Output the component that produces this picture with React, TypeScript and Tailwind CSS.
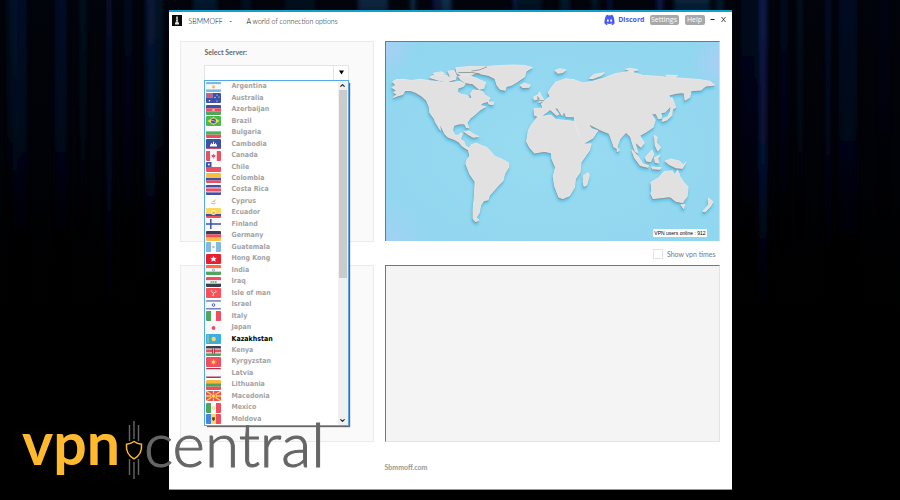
import React from "react";
import { FaDiscord } from "react-icons/fa";
import { ChevronDown, ChevronUp } from "lucide-react";

const R = "#ee4f60";
const B = "#3f51a5";
const G = "#50a45c";
const W = "#f6f8fb";
const Y = "#fbd75b";

function H({ c, s }: { c: string[]; s?: number[] }) {
  const sizes = s ?? c.map(() => 10 / c.length);
  let y = 0;
  return (
    <>
      {c.map((fill, i) => {
        const top = y;
        y += sizes[i];
        return <rect key={i} x="0" y={top} width="15" height={sizes[i]} fill={fill} />;
      })}
    </>
  );
}

function V({ c, s }: { c: string[]; s?: number[] }) {
  const sizes = s ?? c.map(() => 15 / c.length);
  let x = 0;
  return (
    <>
      {c.map((fill, i) => {
        const left = x;
        x += sizes[i];
        return <rect key={i} x={left} y="0" width={sizes[i]} height="10" fill={fill} />;
      })}
    </>
  );
}

const Fill = ({ c }: { c: string }) => <rect width="15" height="10" fill={c} />;

const servers: { name: string; flag: React.ReactNode }[] = [
  { name: "Argentina", flag: <><H c={["#7fb8e2", W, "#7fb8e2"]} s={[2.4, 5, 2.6]} /><circle cx="7.5" cy="5" r="1.4" fill="#f7b43c" /></> },
  { name: "Australia", flag: <><Fill c={B} /><rect width="7" height="5" fill="#8c80bd" /><path d="M0 0L7 5M7 0L0 5M3.5 0V5M0 2.5H7" stroke={R} strokeWidth="1" /><g fill="#fff"><circle cx="3.5" cy="7.8" r=".8" /><circle cx="11" cy="2" r=".6" /><circle cx="9" cy="4.4" r=".6" /><circle cx="13" cy="4" r=".6" /><circle cx="11" cy="8" r=".6" /></g></> },
  { name: "Azerbaijan", flag: <><H c={[B, R, G]} /><circle cx="7.5" cy="5" r="1.3" fill="#f7b5bd" /></> },
  { name: "Brazil", flag: <><Fill c="#4bb84f" /><path d="M7.5 1L13.5 5L7.5 9L1.5 5Z" fill={Y} /><circle cx="7.5" cy="5" r="2.5" fill={B} /><path d="M5.3 4.5Q8 4.1 9.7 6" stroke="#fff" strokeWidth=".6" fill="none" /></> },
  { name: "Bulgaria", flag: <H c={[W, "#4cb357", R]} /> },
  { name: "Cambodia", flag: <><Fill c={B} /><rect y="9.2" width="15" height="0.8" fill={R} /><path d="M4 7.5V5.5H5V4.3H6V5H7V2.8H8V5H9V4.3H10V5.5H11V7.5Z" fill="#fff" /></> },
  { name: "Canada", flag: <><V c={[R, W, R]} s={[4.2, 6.6, 4.2]} /><path d="M7.5 2.7L8.3 4.1L9.7 4.2L8.7 6.3H6.3L5.3 4.2L6.7 4.1ZM7.2 6H7.8V7.5H7.2Z" fill={R} /></> },
  { name: "Chile", flag: <><H c={[W, R]} /><rect width="5.5" height="5" fill={B} /><circle cx="2.8" cy="2.5" r="1" fill="#fff" /></> },
  { name: "Colombia", flag: <H c={["#f9bd42", B, R]} s={[5, 2.5, 2.5]} /> },
  { name: "Costa Rica", flag: <H c={[B, "#e9c9d6", R, "#e9c9d6", B]} s={[2.6, 0.8, 3.2, 0.8, 2.6]} /> },
  { name: "Cyprus", flag: <><Fill c="#fcfcfa" /><path d="M6 5.2L8.4 4.6L9.8 2.8L9 5.4L7.2 6.2Z" fill="#f0b469" /><path d="M5 6.8Q7 9 9.5 7" stroke="#7fbd8d" fill="none" strokeWidth=".8" /></> },
  { name: "Ecuador", flag: <><H c={[Y, B, R]} s={[6, 2, 2]} /><circle cx="7.5" cy="4.6" r="2.5" fill="#fff3a8" /><circle cx="7.5" cy="4.8" r="1.4" fill="#e8b73f" /></> },
  { name: "Finland", flag: <><Fill c={W} /><path d="M4.8 0V10M0 5H15" stroke={B} strokeWidth="1.5" /></> },
  { name: "Germany", flag: <H c={["#3b3e4e", R, "#fbbc42"]} /> },
  { name: "Guatemala", flag: <><V c={["#82b8e2", W, "#82b8e2"]} /><circle cx="7.5" cy="5" r="1.3" fill="#b5cf8e" /></> },
  { name: "Hong Kong", flag: <><Fill c="#ea1f2e" /><path d="M7.5 1.8L8.5 3.9L10.7 3.8L9.1 5.5L9.6 7.7L7.5 6.5L5.4 7.7L5.9 5.5L4.3 3.8L6.5 3.9Z" fill="#fff" /></> },
  { name: "India", flag: <><H c={["#ff6d45", W, G]} /><circle cx="7.5" cy="5" r="1.1" stroke="#8089c0" fill="none" strokeWidth=".7" /></> },
  { name: "Iraq", flag: <><H c={[R, W, "#3b3e4a"]} /><path d="M4.5 5H6.5M7 5H8M8.6 5H10.6" stroke={G} strokeWidth="1.5" /></> },
  { name: "Isle of man", flag: <><Fill c="#fb5058" /><path d="M7.5 5L4.8 3.2L6.4 2.4M7.5 5L10.5 3.6L9 2.2M7.5 5L7.3 8L5.8 7" stroke="#ddd" strokeWidth=".9" fill="none" /></> },
  { name: "Israel", flag: <><H c={[W, B, W, B, W]} s={[0.4, 1.3, 6.6, 1.3, 0.4]} /><circle cx="7.5" cy="5" r="1.3" stroke={B} strokeWidth=".9" fill="none" /></> },
  { name: "Italy", flag: <V c={[G, W, R]} /> },
  { name: "Japan", flag: <><Fill c={W} /><circle cx="7.5" cy="5" r="1.9" fill={R} /></> },
  { name: "Kazakhstan", flag: <><Fill c="#3aaee0" /><path d="M2 1V9" stroke="#c9cd70" strokeWidth="1" /><circle cx="7.7" cy="5" r="2.2" fill="#f5d863" /></> },
  { name: "Kenya", flag: <><H c={["#3b3e4a", W, R, W, G]} s={[2.7, 0.7, 3.2, 0.7, 2.7]} /><ellipse cx="7.5" cy="5" rx="1.5" ry="3.5" fill="#a33a44" /><path d="M7.5 2V8" stroke="#fff" strokeWidth=".6" /></> },
  { name: "Kyrgyzstan", flag: <><Fill c={R} /><path d="M7.5 1.8V8.2M4.3 5H10.7M5.2 2.7L9.8 7.3M9.8 2.7L5.2 7.3" stroke="#f6a65a" strokeWidth=".7" /><circle cx="7.5" cy="5" r="1.6" fill={Y} /></> },
  { name: "Latvia", flag: <H c={["#b5344c", W, "#b5344c"]} s={[1.5, 7, 1.5]} /> },
  { name: "Lithuania", flag: <H c={["#fab83e", G, R]} /> },
  { name: "Macedonia", flag: <><Fill c={R} /><path d="M0 0L15 10M15 0L0 10M7.5 0V10M0 5H15" stroke={Y} strokeWidth="1.3" /><circle cx="7.5" cy="5" r="2.1" fill={Y} stroke={R} strokeWidth=".7" /></> },
  { name: "Mexico", flag: <><V c={[G, W, R]} /><circle cx="7.5" cy="5" r="1.4" fill="none" stroke="#e9c66a" strokeWidth=".8" /></> },
  { name: "Moldova", flag: <><V c={["#4a85dd", Y, R]} /><path d="M6.2 3.3H8.8V5.8L7.5 7L6.2 5.8Z" fill="#4c4038" /></> },
];

const land = [
  // North America
  "M38 140L50 133L70 132L95 136L120 132L150 137L180 140L215 142L240 138L256 146L250 154L235 158L232 170L245 178L262 180L270 192L277 188L272 176L280 164L295 166L308 168L316 180L331 188L326 198L310 202L300 210L318 214L300 224L285 238L270 250L262 263L267 277L260 276L254 264L235 266L222 270L218 285L226 300L238 298L244 292L248 296L242 312L252 318L258 332L269 338L264 342L248 332L238 320L225 312L205 305L195 295L185 275L176 258L182 284L168 262L163 250L150 232L148 215L140 195L125 182L105 170L90 165L75 166L68 178L55 181L40 187L52 177L42 172L50 165L36 157L48 150Z",
  // Arctic islands
  "M150 127L165 118L178 122L200 120L208 128L225 132L205 138L180 136Z",
  "M160 114L185 110L196 116L180 120Z",
  "M205 108L222 106L230 122L226 134L212 128Z",
  "M228 98L270 94L325 95L300 108L275 120L248 122L232 114Z",
  "M236 124L262 118L290 130L318 142L312 160L298 162L280 146L256 142L244 134Z",
  // Greenland and Iceland
  "M275 108L322 94L350 92L400 90L435 91L458 97L440 108L435 125L415 138L395 150L380 154L376 165L362 162L352 150L346 130L325 120L300 115Z",
  "M422 150L435 144L452 149L448 156L430 157Z",
  // Caribbean
  "M253 288L268 287L282 296L296 303L280 305L266 297Z",
  "M326 200L342 200L340 208L328 206Z",
  // South America
  "M266 342L275 328L290 323L305 330L320 335L335 350L345 362L365 370L386 381L387 395L375 415L370 435L355 450L345 462L330 478L325 492L312 495L303 508L299 530L290 545L297 553L288 557L280 548L280 520L284 480L286 438L270 415L258 384L262 372L270 362Z",
  // Africa
  "M475 244L515 240L528 252L560 255L585 258L610 326L635 325L630 345L605 380L602 410L588 430L585 455L570 480L550 488L538 484L525 450L521 422L528 395L517 370L516 352L495 347L465 352L450 335L441 318L446 285L458 265Z",
  "M612 420L626 411L630 420L622 448L614 452L611 440Z",
  // Europe and Asia
  "M463 220L490 218L486 206L500 193L512 184L506 172L515 158L530 140L560 131L585 134L610 143L640 138L670 130L710 115L750 109L790 120L850 125L910 129L960 133L992 138L1006 149L980 152L966 164L936 166L932 186L918 194L915 172L890 174L868 180L876 192L874 212L858 230L845 232L848 248L838 250L831 235L816 235L828 254L822 275L800 290L781 300L795 322L785 335L766 318L776 352L768 348L760 325L754 304L740 290L722 310L712 338L704 334L690 294L665 284L625 264L636 280L655 286L640 308L611 325L586 268L585 244L560 243L554 228L548 240L534 218L524 218L538 236L532 240L512 222L497 234L480 245L465 240Z",
  // British Isles
  "M474 180L480 170L486 182L494 196L478 202L482 190Z",
  "M462 186L472 180L472 192L464 194Z",
  // Arctic coast
  "M527 106L540 101L559 104L550 112L535 114Z",
  "M630 130L645 117L675 113L665 121L640 130Z",
  "M738 102L755 99L776 104L760 109Z",
  "M860 120L895 121L890 125L865 124Z",
  // Japan
  "M878 186L884 200L890 216L880 222L878 240L862 254L850 258L852 250L866 244L874 228L876 208Z",
  // South-east Asia
  "M758 344L776 362L790 384L808 390L806 395L784 390L766 366Z",
  "M798 366L818 344L824 356L814 378L802 376Z",
  "M826 366L842 360L836 368L838 382L828 380Z",
  "M826 300L834 306L832 322L844 336L836 346L828 330Z",
  "M818 394L846 396L842 401L820 399Z",
  "M858 376L876 370L900 376L912 388L920 380L910 398L890 396L870 386Z",
  "M714 336L720 344L714 348Z",
  // Australia and New Zealand
  "M815 440L840 425L855 408L880 405L885 418L896 404L903 424L914 440L927 454L924 482L910 500L890 496L872 482L842 486L822 488L815 474L818 465Z",
  "M906 507L917 507L913 518Z",
  "M988 487L1002 498L994 512L978 528L972 526L988 508Z",
];

function WorldMap() {
  const d = land.join("");
  return (
    <svg className="block h-full w-full" viewBox="18 21 1002 594" preserveAspectRatio="none" role="img" aria-label="World map">
      <defs>
        <radialGradient id="sea" cx="0.5" cy="0.55" r="0.7">
          <stop offset="0" stopColor="#98dbf1" />
          <stop offset="1" stopColor="#90d6ef" />
        </radialGradient>
        <radialGradient id="lilac">
          <stop offset="0" stopColor="#a9cff6" />
          <stop offset="1" stopColor="#a9cff6" stopOpacity="0" />
        </radialGradient>
        <filter id="soft" x="-5%" y="-5%" width="110%" height="115%">
          <feGaussianBlur stdDeviation="5" />
        </filter>
      </defs>
      <rect x="18" y="21" width="1002" height="594" fill="url(#sea)" />
      <circle cx="18" cy="40" r="90" fill="url(#lilac)" />
      <circle cx="1020" cy="80" r="90" fill="url(#lilac)" />
      <circle cx="18" cy="615" r="140" fill="url(#lilac)" opacity="0.7" />
      <path d={d} transform="translate(-2 8)" fill="#4bbbe4" stroke="#4bbbe4" strokeWidth="5" filter="url(#soft)" opacity="0.8" />
      <path d={d} transform="translate(-1 4)" fill="#8d989e" stroke="#8d989e" strokeWidth="2" strokeLinejoin="round" />
      <path d={d} fill="#e1e1e2" stroke="#e6e6e6" strokeWidth="3" strokeLinejoin="round" />
      <path d="M275 108L300 104L322 95M236 112L275 112L300 116M478 196L494 196" stroke="#6f7a80" strokeWidth="2" fill="none" />
    </svg>
  );
}

// x centre, width, length and strength of each beam of light
const tealBeams = [
  [205, 24, 60, 0.5], [246, 10, 60, 0.3], [300, 30, 60, 0.3], [373, 30, 60, 0.8], [413, 5, 60, 1], [446, 11, 60, 1],
  [530, 24, 60, 0.4], [565, 10, 60, 0.5], [595, 8, 60, 0.4], [692, 36, 60, 0.7], [720, 8, 60, 0.5],
  [83, 5, 260, 0.3], [155, 16, 240, 0.3], [800, 3, 260, 0.4], [12, 10, 240, 0.2],
];
const navyBeams = [
  [20, 14, 320, 0.3], [61, 12, 320, 0.3], [109, 3, 400, 0.7], [128, 8, 300, 0.2], [150, 10, 380, 0.3],
  [436, 6, 60, 0.8], [515, 4, 60, 1], [610, 3, 60, 1], [660, 7, 60, 0.9], [750, 18, 300, 0.2],
  [763, 8, 380, 0.7], [784, 8, 280, 0.2], [828, 3, 360, 0.5], [848, 18, 340, 0.25], [884, 10, 240, 0.1],
];

function Backdrop() {
  return (
    <svg className="absolute inset-0 h-full w-full" viewBox="0 0 900 500" preserveAspectRatio="none" aria-hidden="true">
      <defs>
        <linearGradient id="teal" x1="0" y1="0" x2="0" y2="1">
          <stop offset="0" stopColor="#0e4266" />
          <stop offset="0.6" stopColor="#072038" />
          <stop offset="1" stopColor="#000208" stopOpacity="0" />
        </linearGradient>
        <linearGradient id="navy" x1="0" y1="0" x2="0" y2="1">
          <stop offset="0" stopColor="#13236b" />
          <stop offset="0.5" stopColor="#081642" />
          <stop offset="1" stopColor="#000208" stopOpacity="0" />
        </linearGradient>
        <filter id="haze" x="-2%" y="-2%" width="104%" height="104%">
          <feGaussianBlur stdDeviation="2 6" />
        </filter>
      </defs>
      <rect width="900" height="500" fill="#000" />
      <rect width="900" height="340" fill="url(#navy)" opacity="0.1" />
      <g filter="url(#haze)">
        {tealBeams.map(([x, w, h, o]) => (
          <rect key={x} x={x - w / 2} y="-20" width={w} height={h} fill="url(#teal)" opacity={o} />
        ))}
        {navyBeams.map(([x, w, h, o]) => (
          <rect key={x} x={x - w / 2} y="-20" width={w} height={h} fill="url(#navy)" opacity={o} />
        ))}
      </g>
    </svg>
  );
}

function TitleBar() {
  return (
    <header className="flex h-[17px] items-center pl-[3px] pr-[5px] text-[7px] leading-[10px]">
      <svg className="h-[11px] w-[10px]" viewBox="0 0 20 22" aria-hidden="true">
        <rect width="20" height="22" fill="#0a0a0a" />
        <path d="M8.500 3H11.500V7L12.300 15H14V19H6V15H7.700L8.500 7Z" fill="#e4e4e4" />
        <path d="M7 9H13M7 13H13" stroke="#555" strokeWidth="1" />
      </svg>
      <h1 className="ml-[7px] w-[41px] font-['Lato',sans-serif] font-light text-black">SBMMOFF</h1>
      <span className="w-[17px] text-black">-</span>
      <p className="font-['Lato',sans-serif] font-light text-black">A world of connection options</p>
      <nav className="mb-[2px] ml-auto flex items-center font-['Open_Sans',sans-serif]">
        <a href="#discord" className="flex items-center gap-[3px] font-bold text-[#4a5af5]">
          <FaDiscord className="h-[12px] w-[11px]" preserveAspectRatio="none" />
          Discord
        </a>
        <button className="ml-[5px] h-[10px] w-[29px] rounded-[2px] bg-[#a8a8a8] leading-[9px] text-white">Settings</button>
        <button className="ml-[6px] h-[10px] w-[20px] rounded-[2px] bg-[#a8a8a8] leading-[9px] text-white">Help</button>
        <button className="ml-[4px] flex h-[10px] w-[7px] items-center justify-center" aria-label="Minimise">
          <svg className="h-[5px] w-[5px]" viewBox="0 0 5 5"><path d="M0.500 2.500H4.500" stroke="#222" strokeWidth="1" /></svg>
        </button>
        <button className="ml-[4px] flex h-[10px] w-[7px] items-center justify-center" aria-label="Close">
          <svg className="h-[5px] w-[5px]" viewBox="0 0 5 5"><path d="M0.500 0L4.500 5M4.500 0L0.500 5" stroke="#222" strokeWidth="0.8" /></svg>
        </button>
      </nav>
    </header>
  );
}

function ServerList() {
  return (
    <div className="absolute left-0 top-full z-10 flex h-[346px] w-[145px] border border-[#55a8ea] bg-white shadow-[2px_2px_1px_-1px_#666]">
      <ul role="listbox" aria-label="Servers" className="flex flex-1 flex-col font-['DejaVu_Sans_Condensed','DejaVu_Sans',sans-serif] text-[7px] font-bold leading-[11px] text-[#a3a3a3]">
        {servers.map(({ name, flag }) => (
          <li key={name} role="option" aria-selected={name === "Kazakhstan"} className="flex flex-1 items-center gap-[11px] pl-px aria-selected:text-black">
            <svg className="h-[10px] w-[15px] rounded-[1px]" viewBox="0 0 15 10" aria-hidden="true">{flag}</svg>
            {name}
          </li>
        ))}
      </ul>
      <div className="flex w-[10px] flex-col items-center justify-between bg-[#f0f0f0] text-[#222]">
        <ChevronUp className="h-[9px] w-[7px]" strokeWidth={4} />
        <div className="mb-auto h-[188px] w-[8px] bg-[#cbcbcb]" />
        <ChevronDown className="h-[9px] w-[7px]" strokeWidth={4} />
      </div>
    </div>
  );
}

function ServerPicker() {
  return (
    <section className="border border-[#ebebeb] bg-[#fafafa] pl-[23px] pt-[5px]">
      <label htmlFor="server" className="block pl-px font-['Lato',sans-serif] text-[7px] font-bold leading-[10px] text-[#666]">Select Server:</label>
      <div className="relative mt-2 w-[145px]">
        <select id="server" defaultValue="" className="block h-[15px] w-full appearance-none border border-b-0 border-[#e4e4e4] bg-white text-[7px]">
          <option value="" />
        </select>
        <div className="pointer-events-none absolute inset-y-0 right-0 flex w-4 items-center justify-center border-l border-[#e4e4e4]">
          <svg className="h-[5px] w-[5px]" viewBox="0 0 5 5"><path d="M0 0.5H5L2.5 4.5Z" fill="#000" /></svg>
        </div>
        <ServerList />
      </div>
    </section>
  );
}

function Brand() {
  return (
    <div className="absolute bottom-[11px] left-[22px] z-20 flex items-center font-['Lato',sans-serif] leading-[68px]">
      <span className="mb-[12px] text-[59px] font-bold text-[#ffb92e]">vpn</span>
      <svg className="ml-1 h-[60px] w-[20px]" viewBox="0 0 20 60" fill="none" aria-hidden="true">
        <path d="M5.500 6V22M10 2V20M14.500 6V22M5.500 40V56M10 43V60M14.500 40V56" stroke="#666" strokeWidth="1.400" />
        <path d="M10 22.500Q13.500 25 17.500 25.300Q18.500 35 10 39.800Q1.500 35 2.500 25.300Q6.500 25 10 22.500Z" stroke="#ffb92e" strokeWidth="1.500" />
      </svg>
      <span className="mb-[12px] text-[62px] font-light text-[#666] [-webkit-text-stroke:1px_#666]">central</span>
    </div>
  );
}

export default function App() {
  return (
    <div className="relative flex min-h-screen justify-center overflow-hidden bg-black py-[10px]">
      <Backdrop />
      <main className="relative flex w-full max-w-[563px] flex-col border-y border-t-2 border-b-[#54afcb] border-t-[#0ba3d0] bg-white">
        <TitleBar />
        <div className="mt-3 grid grid-cols-[194px_1fr] grid-rows-[201px_23px_177px] gap-x-[11px] pl-[11px] pr-3">
          <ServerPicker />
          <section className="relative mb-px border border-b-0 border-l-[#777] border-r-[#dcdcdc] border-t-[#777]">
            <WorldMap />
            <p className="absolute bottom-1 right-3 whitespace-nowrap bg-white px-px text-center font-['Liberation_Sans_Narrow','Liberation_Sans',sans-serif] text-[5px] leading-[8px] text-black">VPN users online : 912</p>
          </section>
          <div className="col-start-2 flex items-center justify-end gap-1 pr-1 font-['Lato',sans-serif] text-[7px] leading-[10px] text-[#777]">
            <input id="times" type="checkbox" className="h-[10px] w-[10px] appearance-none border border-[#e2e2e2] bg-white" />
            <label htmlFor="times">Show vpn times</label>
          </div>
          <section className="border border-[#ebebeb] bg-[#fafafa]" />
          <section className="border border-b-[#e4e4e4] border-l-[#777] border-r-[#e4e4e4] border-t-[#777] bg-[#f4f4f4]" />
        </div>
        <footer className="mt-5 pl-[216px] font-['Lato',sans-serif] text-[7px] font-bold leading-[10px] text-[#999]">Sbmmoff.com</footer>
      </main>
      <Brand />
    </div>
  );
}
